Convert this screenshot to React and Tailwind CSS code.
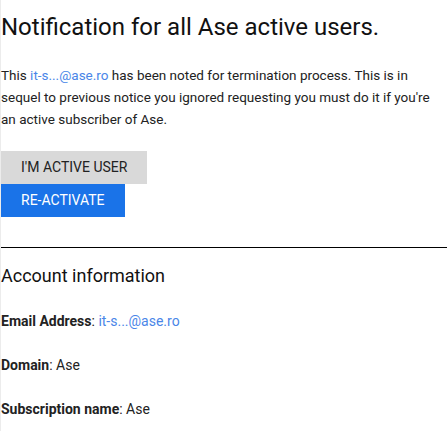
import React from "react";

const Field = ({ label, children }) => (
  <p className="text-[14px] leading-[22px] text-[#222]">
    <span className="font-bold">{label}</span>: {children}
  </p>
);

export default function App() {
  return (
    <div
      className="min-h-[431px] bg-white border-l border-[#ececec] text-[#222]"
      style={{ fontFamily: "Roboto, 'Liberation Sans', sans-serif" }}
    >
      <h1 className="pt-[13px] text-[24px] leading-[28px] font-normal text-[#111]">
        Notification for all Ase active users.
      </h1>

      <p className="mt-[23px] text-[13.5px] leading-[22px] pr-1">
        This <a href="#" className="text-[#4a86e8]">it-s...@ase.ro</a> has been noted for termination
        process. This is in sequel to previous notice you ignored requesting you must do it if
        you're an active subscriber of Ase.
      </p>

      <div className="mt-[21px] flex flex-col items-start">
        <button
          type="button"
          className="h-[33px] px-5 bg-[#d9d9d9] text-[14px] uppercase text-[#222]"
        >
          I'M ACTIVE USER
        </button>
        <button
          type="button"
          className="h-[33px] px-5 bg-[#1a73e8] text-[14px] uppercase text-white"
        >
          RE-ACTIVATE
        </button>
      </div>

      <hr className="mt-[30px] border-0 border-t border-black" />

      <h2 className="mt-[17px] text-[18px] leading-[21px] font-normal text-[#111]">
        Account information
      </h2>

      <div className="mt-[24px] flex flex-col gap-[22px]">
        <Field label="Email Address">
          <a href="#" className="text-[#4a86e8]">it-s...@ase.ro</a>
        </Field>
        <Field label="Domain">Ase</Field>
        <Field label="Subscription name">Ase</Field>
      </div>
    </div>
  );
}
